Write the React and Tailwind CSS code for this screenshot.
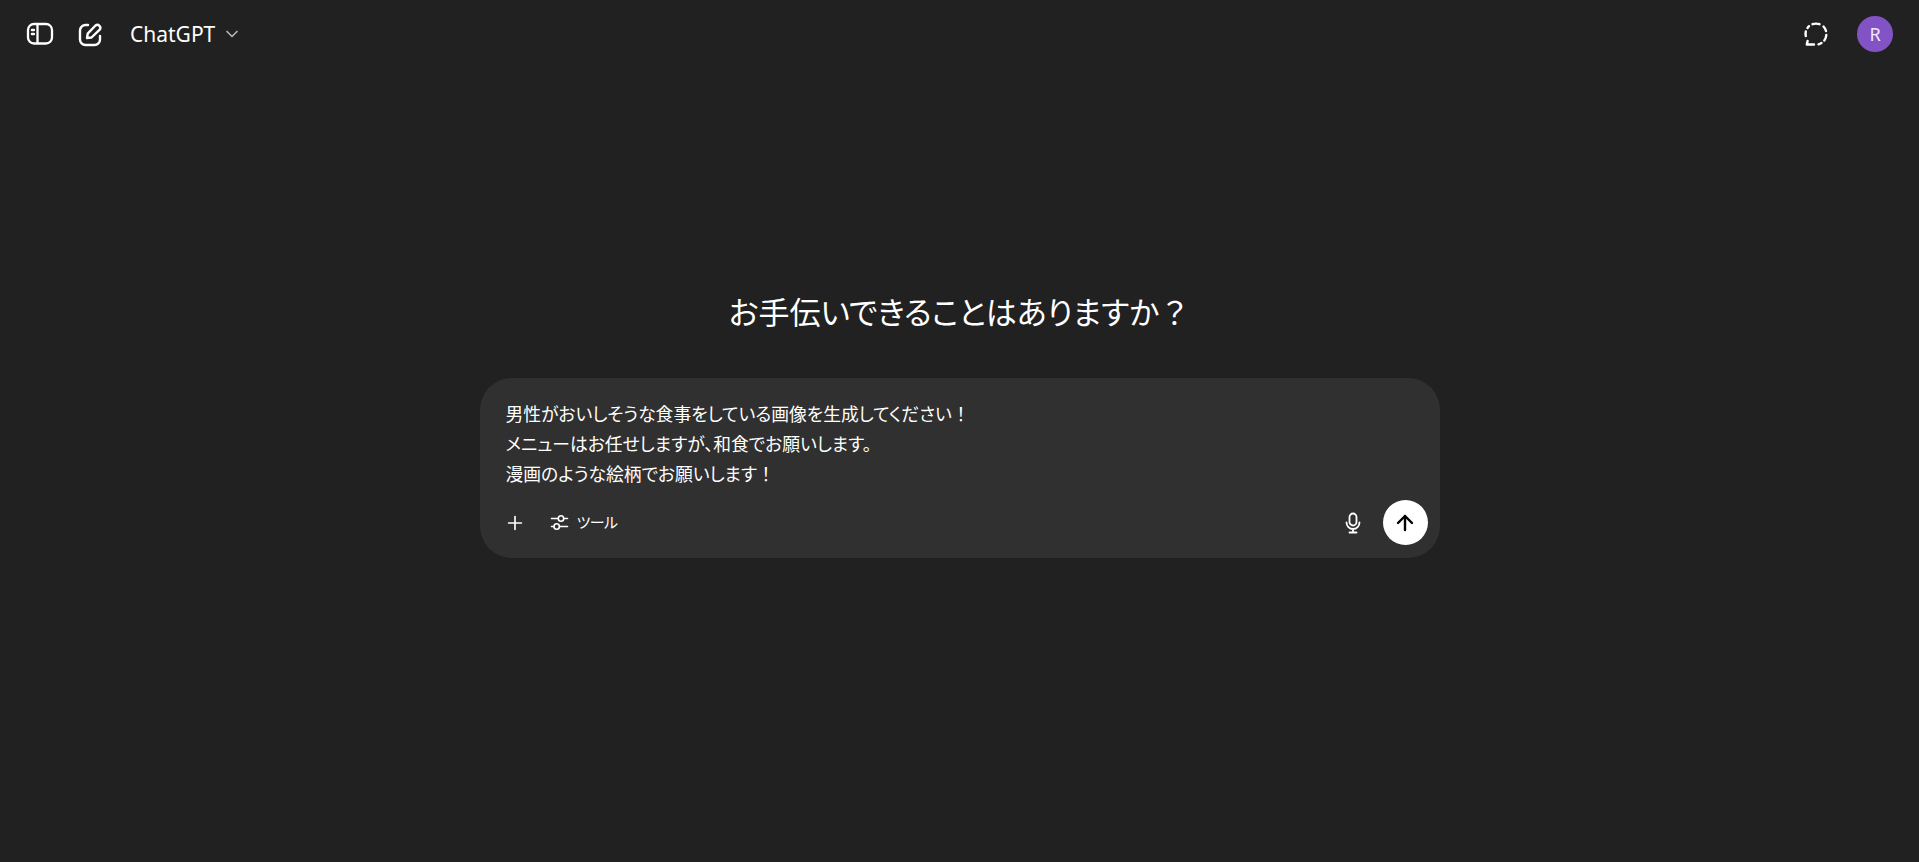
import { ChevronDown, Plus, ArrowUp } from "lucide-react";

const font = "font-['Noto_Sans_CJK_JP','Liberation_Sans',sans-serif]";

function SidebarIcon() {
  return (
    <svg width="28" height="28" viewBox="0 0 28 28" fill="none" stroke="currentColor" strokeWidth="2.3">
      <rect x="2" y="4" width="24" height="19.500" rx="6" />
      <path d="M11.500 4v19.500" />
      <path d="M6 10h1.800M6 14h1.800" strokeWidth="2.600" strokeLinecap="round" />
    </svg>
  );
}

function EditIcon() {
  return (
    <svg width="26" height="26" viewBox="0 0 26 26" fill="none" stroke="currentColor" strokeWidth="2.400" strokeLinecap="round" strokeLinejoin="round">
      <path d="M11 4H8.500A5.500 5.500 0 0 0 3 9.500v9A5.500 5.500 0 0 0 8.500 24h9a5.500 5.500 0 0 0 5.500-5.500V15" />
      <path d="M10 17l.7-4.300L18.500 4.500a3 3 0 0 1 4.200 4.200L14.500 16.500z" />
    </svg>
  );
}

function TempChatIcon() {
  return (
    <svg width="26" height="26" viewBox="0 0 26 26" fill="none" stroke="currentColor" strokeWidth="2.400" strokeLinecap="round" strokeLinejoin="round">
      <path d="M9.500 3.200a10.500 10.500 0 0 1 7 0" />
      <path d="M20.500 5.500a10.500 10.500 0 0 1 2.500 4.500" />
      <path d="M23.300 14a10.500 10.500 0 0 1-2 5.500" />
      <path d="M18.500 22a10.500 10.500 0 0 1-3 1.300" />
      <path d="M11 23.500H3.800l.8-3.500" />
      <path d="M2.800 15a10.500 10.500 0 0 1 0-4.500" />
      <path d="M4.500 7a10.500 10.500 0 0 1 1.500-1.800" />
    </svg>
  );
}

function ToolsIcon() {
  return (
    <svg width="19" height="19" viewBox="0 0 19 19" fill="none" stroke="currentColor" strokeWidth="1.600" strokeLinecap="round">
      <path d="M1.500 5.500h6.500M14 5.500h3.500M1.500 13.500h2.500M9.500 13.500h8" />
      <circle cx="11" cy="5.500" r="2.700" />
      <circle cx="6.700" cy="13.500" r="2.700" />
    </svg>
  );
}

function MicIcon() {
  return (
    <svg width="20" height="22" viewBox="0 0 20 22" fill="none" stroke="currentColor" strokeWidth="1.800" strokeLinecap="round">
      <rect x="6.500" y="1.500" width="7" height="12" rx="3.500" />
      <path d="M3.500 10.500a6.500 6.500 0 0 0 13 0M10 17v3.500M6.500 20.500h7" />
    </svg>
  );
}

export default function App() {
  return (
    <div className={`h-[862px] bg-[#212121] text-white flex flex-col overflow-hidden ${font}`}>
      {/* top bar */}
      <header className="h-[68px] shrink-0 flex items-center px-[26px]">
        <SidebarIcon />
        <div className="ml-[23px]">
          <EditIcon />
        </div>
        <div className="ml-[27px] flex items-center gap-[7px]">
          <span className="pt-[2px] text-[21px] font-['Noto_Sans',sans-serif]">ChatGPT</span>
          <ChevronDown size={20} className="text-[#b4b4b4]" />
        </div>
        <div className="ml-auto mr-[28px]">
          <TempChatIcon />
        </div>
        <div className="w-9 h-9 rounded-full bg-[#8253c4] flex items-center justify-center text-[18px] text-[#f0e8fa] font-['Noto_Sans',sans-serif]">
          R
        </div>
      </header>

      <main className="flex flex-col items-center pt-[220px]">
        <h1 className="text-[31px] leading-[46px] font-normal">
          <span className="[font-feature-settings:'palt']">お手伝いできることはありますか</span>？
        </h1>

        <div className="mt-[44px] w-[960px] h-[180px] rounded-[32px] bg-[#303030] flex flex-col">
          <div className="pt-[20px] pl-[26px] text-[17.800px] leading-[30px] text-white">
            <p><span className="[font-feature-settings:'palt']">男性がおいしそうな食事をしている画像を生成してください</span>！</p>
            <p className="[font-feature-settings:'palt']">メニューはお任せしますが、和食でお願いします。</p>
            <p><span className="[font-feature-settings:'palt']">漫画のような絵柄でお願いします</span>！</p>
          </div>
          <div className="mt-auto mb-[13px] flex items-center pl-[24px] pr-[12px]">
            <Plus size={22} strokeWidth={1.800} />
            <div className="ml-[24px] flex items-center gap-[8px] text-[15px] tracking-[-0.5px] [font-feature-settings:'palt']">
              <ToolsIcon />
              <span>ツール</span>
            </div>
            <div className="ml-auto mr-[20px]">
              <MicIcon />
            </div>
            <div className="w-[45px] h-[45px] rounded-full bg-white flex items-center justify-center">
              <ArrowUp size={24} strokeWidth={2.400} className="text-black" />
            </div>
          </div>
        </div>
      </main>
    </div>
  );
}
